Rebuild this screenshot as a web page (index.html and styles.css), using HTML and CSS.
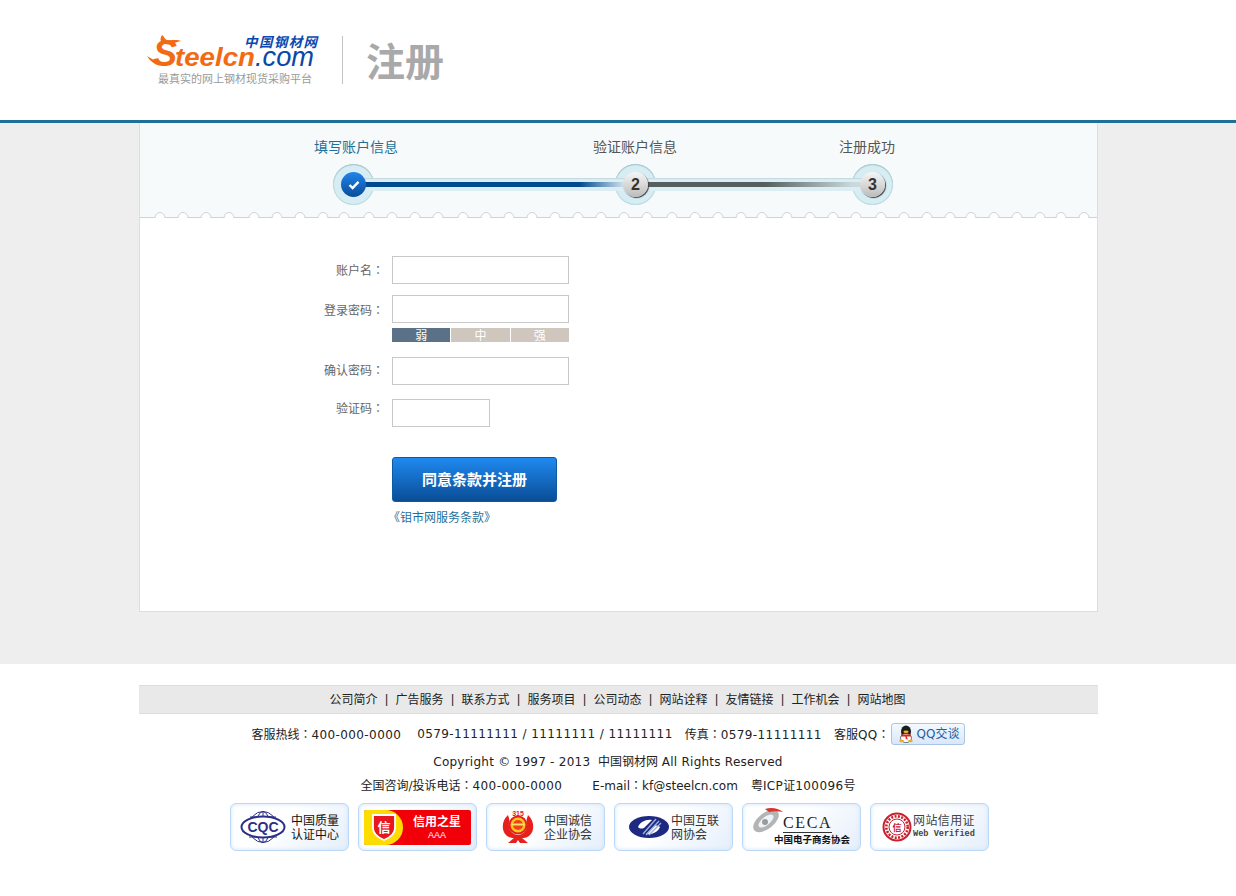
FILE: index.html
```html
<!DOCTYPE html>
<html lang="zh-CN">
<head>
<meta charset="utf-8">
<title>注册</title>
<link rel="stylesheet" href="styles.css">
</head>
<body>
<header class="site-head">
  <svg class="logo" width="175" height="56" viewBox="0 0 175 56">
    <path fill="#f26a12" d="M16 3c3 2 2 4 5 5 5 1 9-1 14 1-3 1-6 1-8 3-5 1-9 0-11-1-2-2-2-5 0-8z"/>
    <path fill="#f26a12" d="M1 24c5 3 8 5 12 6l-1 3C8 32 4 29 1 24z"/>
    <text class="logo-s" x="7" y="34">S</text>
    <text class="logo-word logo-orange" x="29" y="34" textLength="80" lengthAdjust="spacingAndGlyphs">teelcn</text>
    <text class="logo-word logo-blue" x="109" y="34" textLength="59" lengthAdjust="spacingAndGlyphs">.com</text>
    <text class="logo-cn" x="98" y="15" textLength="73">中国钢材网</text>
    <text class="logo-sub" x="12" y="51" textLength="154">最真实的网上钢材现货采购平台</text>
  </svg>
  <span class="head-rule"></span>
  <h1 class="head-title">注册</h1>
</header>

<main class="main">
  <section class="card">
    <div class="steps">
      <div class="step-labels">
        <span class="step-label is-on">填写账户信息</span>
        <span class="step-label">验证账户信息</span>
        <span class="step-label">注册成功</span>
      </div>
      <div class="step-track">
        <span class="ring"><span class="dot dot-on"><svg width="12" height="10" viewBox="0 0 12 10"><path d="M1.5 5 4.6 8 10.5 1.8" fill="none" stroke="#fff" stroke-width="2.4"/></svg></span></span>
        <span class="seg seg-one"></span>
        <span class="ring"><span class="dot">2</span></span>
        <span class="seg seg-two"></span>
        <span class="ring"><span class="dot">3</span></span>
      </div>
      <svg class="scallop" width="957" height="7" viewBox="0 0 957 7">
        <rect y="5" width="957" height="1" fill="#d2d2d2"/>
        <rect y="6" width="957" height="1" fill="#fff"/>
        <path fill="#fff" stroke="#d2d2d2" d="M15 6a5 5.5 0 0 1 10 0m13 0a5 5.5 0 0 1 10 0m13 0a5 5.5 0 0 1 10 0m13 0a5 5.5 0 0 1 10 0m15 0a5 5.5 0 0 1 10 0m13 0a5 5.5 0 0 1 10 0m13 0a5 5.5 0 0 1 10 0m13 0a5 5.5 0 0 1 10 0m11 0a5 5.5 0 0 1 10 0m15 0a5 5.5 0 0 1 10 0m13 0a5 5.5 0 0 1 10 0m13 0a5 5.5 0 0 1 10 0m13 0a5 5.5 0 0 1 10 0m15 0a5 5.5 0 0 1 10 0m13 0a5 5.5 0 0 1 10 0m13 0a5 5.5 0 0 1 10 0m13 0a5 5.5 0 0 1 10 0m13 0a5 5.5 0 0 1 10 0m13 0a5 5.5 0 0 1 10 0m13 0a5 5.5 0 0 1 10 0m13 0a5 5.5 0 0 1 10 0m13 0a5 5.5 0 0 1 10 0m15 0a5 5.5 0 0 1 10 0m13 0a5 5.5 0 0 1 10 0m13 0a5 5.5 0 0 1 10 0m13 0a5 5.5 0 0 1 10 0m11 0a5 5.5 0 0 1 10 0m15 0a5 5.5 0 0 1 10 0m13 0a5 5.5 0 0 1 10 0m13 0a5 5.5 0 0 1 10 0m13 0a5 5.5 0 0 1 10 0m15 0a5 5.5 0 0 1 10 0m13 0a5 5.5 0 0 1 10 0m13 0a5 5.5 0 0 1 10 0m13 0a5 5.5 0 0 1 10 0m11 0a5 5.5 0 0 1 10 0m13 0a5 5.5 0 0 1 10 0m13 0a5 5.5 0 0 1 10 0m13 0a5 5.5 0 0 1 10 0m11 0a5 5.5 0 0 1 10 0m13 0a5 5.5 0 0 1 10 0"/>
      </svg>
    </div>

    <form class="form">
      <div class="row row-name">
        <label class="label">账户名<span class="colon" lang="zh-TW">：</span></label>
        <input class="field" type="text">
      </div>
      <div class="row row-pass">
        <label class="label">登录密码<span class="colon" lang="zh-TW">：</span></label>
        <div class="field-stack">
          <input class="field" type="password">
          <div class="meter">
            <span class="meter-cell is-on">弱</span>
            <span class="meter-cell">中</span>
            <span class="meter-cell">强</span>
          </div>
        </div>
      </div>
      <div class="row row-confirm">
        <label class="label">确认密码<span class="colon" lang="zh-TW">：</span></label>
        <input class="field" type="password">
      </div>
      <div class="row row-code">
        <label class="label label-code">验证码<span class="colon" lang="zh-TW">：</span></label>
        <input class="field field-short" type="text">
      </div>
      <div class="actions">
        <button class="submit" type="button">同意条款并注册</button>
        <a class="terms" href="#">《钼市网服务条款》</a>
      </div>
    </form>
  </section>
</main>

<footer class="foot">
  <nav class="foot-nav">
    <a href="#">公司简介</a><span class="sep">|</span>
    <a href="#">广告服务</a><span class="sep">|</span>
    <a href="#">联系方式</a><span class="sep">|</span>
    <a href="#">服务项目</a><span class="sep">|</span>
    <a href="#">公司动态</a><span class="sep">|</span>
    <a href="#">网站诠释</a><span class="sep">|</span>
    <a href="#">友情链接</a><span class="sep">|</span>
    <a href="#">工作机会</a><span class="sep">|</span>
    <a href="#">网站地图</a>
  </nav>
  <div class="contact">
    <span>客服热线<span class="colon" lang="zh-TW">：</span><span class="lat">400-000-0000</span></span>
    <span class="lat gap-lg">0579-11111111 / 11111111 / 11111111</span>
    <span class="gap-md">传真<span class="colon" lang="zh-TW">：</span><span class="lat">0579-11111111</span></span>
    <span class="gap-md">客服<span class="lat">QQ</span><span class="colon" lang="zh-TW">：</span></span>
    <a class="qq" href="#">
      <svg width="18" height="18" viewBox="0 0 18 18">
        <ellipse cx="9" cy="6.5" rx="5" ry="6" fill="#1c1c1c"/>
        <ellipse cx="9" cy="13" rx="5.5" ry="4.6" fill="#fff" stroke="#222" stroke-width=".6"/>
        <ellipse cx="9" cy="6.8" rx="2.6" ry="1.2" fill="#f6b81c"/>
        <path d="M4 9.5h10v2H9.8l1 3-2-.6-.4-2.4H4z" fill="#e0241c"/>
        <ellipse cx="4.6" cy="16" rx="2.4" ry="1.3" fill="#f6a81c"/>
        <ellipse cx="13.4" cy="16" rx="2.4" ry="1.3" fill="#f6a81c"/>
      </svg>
      <span>QQ交谈</span>
    </a>
  </div>
  <p class="foot-line foot-copy"><span class="lat-copy">Copyright © 1997 - 2013</span>&nbsp; 中国钢材网 <span class="lat-copy">All Rights Reserved</span></p>
  <p class="foot-line foot-tel"><span>全国咨询/投诉电话<span class="colon" lang="zh-TW">：</span><span class="lat">400-000-0000</span></span><span class="gap-xl">E-mail<span class="colon" lang="zh-TW">：</span>kf@steelcn.com</span><span class="gap-sm">粤<span class="lat">ICP</span>证<span class="lat">100096</span>号</span></p>
  <div class="badges">
    <a class="badge" href="#">
      <svg width="46" height="34" viewBox="0 0 46 34">
        <g fill="none" stroke="#2c2f86">
          <ellipse cx="23" cy="17" rx="14" ry="15.5"/>
          <ellipse cx="23" cy="17" rx="7" ry="15.5"/>
          <path d="M10 7h26M9 27h28M8 12h30M8 22h30M23 1v32"/>
          <ellipse cx="23" cy="17" rx="21.5" ry="10.5" stroke-width="2" fill="#fff"/>
        </g>
        <text class="cqc" x="23" y="22" text-anchor="middle">CQC</text>
      </svg>
      <span class="badge-text badge-black">中国质量<br>认证中心</span>
    </a>
    <a class="badge badge-star" href="#">
      <span class="star-box">
        <span class="star-left">
          <svg width="24" height="28" viewBox="0 0 24 28">
            <path d="M1 2h22v13c0 6-6 10-11 12C7 25 1 21 1 15z" fill="#e8171f" stroke="#fff" stroke-width="1.8"/>
            <text class="star-mark" x="12" y="19" text-anchor="middle">信</text>
          </svg>
        </span>
        <span class="star-right"><b>信用之星</b><small>AAA</small></span>
      </span>
    </a>
    <a class="badge" href="#">
      <svg width="34" height="34" viewBox="0 0 34 34">
        <path d="M7 5C1 10 0 20 5 25c3 3 6 3 8 3l-6 5h8l2-3 2 3h8l-6-5c2 0 5 0 8-3 5-5 4-15-2-20-1 4-2 5-1 8 1 7-4 12-9 12S7 20 8 13c1-3 0-4-1-8z" fill="#e8201c"/>
        <circle cx="17" cy="15" r="8.5" fill="#f8c81c" stroke="#e8201c" stroke-width="2"/>
        <circle cx="17" cy="15" r="5" fill="#f04020"/>
        <rect x="10.5" y="13.5" width="13" height="2" fill="#f8e060"/>
        <text class="emblem-num" x="17" y="6" text-anchor="middle">315</text>
      </svg>
      <span class="badge-text">中国诚信<br>企业协会</span>
    </a>
    <a class="badge badge-isc" href="#">
      <svg width="42" height="26" viewBox="0 0 42 26">
        <ellipse cx="21" cy="13" rx="20" ry="11" fill="#1e2a82"/>
        <path d="M10 13c2-5 8-8 14-7l-7 7c-2 2-5 2-7 0zM32 13c-2 5-8 8-14 7l7-7c2-2 5-2 7 0z" fill="#fff"/>
        <path d="M15 20 28 5M18 21 31 7M21 21 33 9" stroke="#9fb0d8" stroke-width="1.4" fill="none"/>
      </svg>
      <span class="badge-text">中国互联<br>网协会</span>
    </a>
    <a class="badge badge-ceca" href="#">
      <span class="ceca-top">
        <svg width="34" height="26" viewBox="0 0 34 26">
          <ellipse cx="15" cy="14" rx="15" ry="8" transform="rotate(-38 15 14)" fill="#b4b4b4"/>
          <ellipse cx="15" cy="14" rx="9" ry="4" transform="rotate(-38 15 14)" fill="#eef3f8"/>
          <path d="M14 2c6-2 13-1 18 3-5-1-10-1-14 0z" fill="#d8342c"/>
          <circle cx="14" cy="15" r="3" fill="#9a9a9a"/>
        </svg>
        <span class="ceca-word">CECA</span>
      </span>
      <span class="ceca-cn">中国电子商务协会</span>
    </a>
    <a class="badge badge-web" href="#">
      <svg width="30" height="30" viewBox="0 0 30 30">
        <circle cx="15" cy="15" r="13.5" fill="#fff" stroke="#c8202c" stroke-width="2"/>
        <circle cx="15" cy="15" r="8" fill="none" stroke="#c8202c" stroke-width="1"/>
        <circle cx="15" cy="15" r="10.7" fill="none" stroke="#c8202c" stroke-width="2.6" stroke-dasharray="2 1.4"/>
        <text class="stamp-mark" x="15" y="19" text-anchor="middle">信</text>
      </svg>
      <span class="web-text"><span>网站信用证</span><span class="web-en">Web Verified</span></span>
    </a>
  </div>
</footer>
</body>
</html>
```
FILE: styles.css
```css
* { box-sizing: border-box; }
html, body { margin: 0; padding: 0; }
body {
  background: #fff;
  color: #333;
  font: 12px/16px "DejaVu Sans", "Noto Sans CJK SC", sans-serif;
}
a { color: inherit; text-decoration: none; }
p, h1 { margin: 0; }
.colon { font-family: "Noto Sans CJK TC", sans-serif; }
.lat { letter-spacing: .4px; }
.lat-copy { letter-spacing: .25px; }

.site-head {
  display: flex;
  align-items: flex-start;
  height: 123px;
  padding: 32px 0 0 146px;
  border-bottom: 3px solid #1f7099;
  background: #fff;
}
.logo { display: block; flex: none; }
.logo-s { fill: #f26a12; font: italic 700 36px "Liberation Sans", sans-serif; }
.logo-word { font-family: "Liberation Sans", sans-serif; font-style: italic; font-size: 26px; }
.logo-orange { fill: #f26a12; font-weight: 700; }
.logo-blue { fill: #0a48a8; font-size: 28px; }
.logo-cn { fill: #0a48b0; font-family: "Noto Sans CJK SC", sans-serif; font-weight: 700; font-style: italic; font-size: 13.5px; }
.logo-sub { fill: #9a9a9a; font-family: "Noto Sans CJK SC", sans-serif; font-size: 11px; }
.head-rule { width: 1px; height: 48px; margin: 4px 0 0 21px; background: #c4c4c4; }
.head-title {
  margin: 3px 0 0 23px;
  color: #a9a9a9;
  font: 700 39px/48px "Noto Sans CJK SC", sans-serif;
}

.main { height: 541px; background: #eee; }
.card {
  width: 959px;
  height: 489px;
  margin: 0 0 0 139px;
  border: 1px solid #ddd;
  border-top: 0;
  background: #fff;
}

.steps { height: 96px; background: #f6fafb; padding-top: 15px; }
.step-labels { display: flex; height: 16px; padding-left: 174px; font: 14px/16px "Noto Sans CJK SC", sans-serif; color: #555; }
.step-label:nth-child(2) { margin-left: 195px; }
.step-label:nth-child(3) { margin-left: 162px; }
.step-label.is-on { color: #1f7099; }
.step-track { display: flex; align-items: center; height: 41px; margin-top: 10px; padding-left: 193px; }
.ring {
  display: flex;
  flex: none;
  align-items: center;
  justify-content: center;
  width: 41px;
  height: 41px;
  border-radius: 50%;
  background: #d5edf3;
  box-shadow: inset 0 1px 1px #a9c3c9, inset 0 0 0 1px #c0dae0;
}
.dot {
  position: relative;
  z-index: 2;
  display: flex;
  align-items: center;
  justify-content: center;
  width: 25px;
  height: 25px;
  border-radius: 50%;
  background: linear-gradient(#f6f6f6, #bcbcbc);
  box-shadow: 1px 1px 1px #444;
  color: #333;
  font: 700 16px/1 "Liberation Sans", sans-serif;
}
.dot-on { background: linear-gradient(#1f85ea, #0b4c98); box-shadow: none; }
.seg { position: relative; z-index: 1; flex: none; height: 13px; margin: 0 -12px; background: #dcedf4; box-shadow: inset 0 1px 1px #c3d8df; }
.seg::after { content: ""; position: absolute; left: 0; right: 0; top: 4px; height: 5px; }
.seg-one { width: 265px; }
.seg-one::after { background: linear-gradient(to right, #00498f 0 82%, #dcedf4 100%); }
.seg-two { width: 220px; }
.seg-two::after { background: linear-gradient(to right, #555f5f 0 55%, #c9dadd 95%); }
.scallop { display: block; margin-top: 7px; }

.form { padding-top: 37px; }
.row { display: flex; align-items: flex-start; margin-bottom: 11px; }
.row-name { height: 28px; }
.row-pass { height: 47px; margin-bottom: 15px; }
.row-confirm { height: 28px; margin-bottom: 14px; }
.row-code { height: 28px; margin-bottom: 30px; }
.label {
  flex: none;
  width: 244px;
  margin-right: 8px;
  padding-top: 6px;
  color: #666;
  text-align: right;
  font: 12px/16px "Noto Sans CJK SC", sans-serif;
}
.row-pass .label { padding-top: 7px; }
.row-confirm .label { padding-top: 5px; }
.label-code { padding-top: 1px; }
.field { display: block; width: 177px; height: 28px; padding: 0 6px; border: 1px solid #c8c8c8; background: #fff; outline: 0; }
.field-short { width: 98px; }
.field-stack { width: 177px; }
.meter { display: flex; gap: 1px; margin-top: 5px; }
.meter-cell {
  flex: 1;
  height: 14px;
  background: #cfc6be;
  color: #fff;
  text-align: center;
  font: 12px/14px "Noto Sans CJK SC", sans-serif;
}
.meter-cell.is-on { background: #5a7187; }
.actions { display: flex; flex-direction: column; align-items: flex-start; padding-left: 252px; }
.submit {
  width: 165px;
  height: 45px;
  padding: 0 0 2px;
  border: 1px solid #0c5aa6;
  border-radius: 3px;
  background: linear-gradient(#2089ef, #0a4d96);
  color: #fff;
  font: 700 15px/1 "Noto Sans CJK SC", sans-serif;
  cursor: pointer;
}
.terms { margin: 7px 0 0 -4px; color: #1f7099; font: 12px/16px "Noto Sans CJK SC", sans-serif; }

.foot { height: 232px; padding-top: 21px; background: #fff; color: #222; text-align: center; }
.foot-nav {
  display: flex;
  justify-content: center;
  align-items: center;
  gap: 8px;
  width: 959px;
  height: 29px;
  margin: 0 0 0 139px;
  padding: 0 2px 2px 0;
  border-top: 1px solid #ddd;
  border-bottom: 1px solid #ddd;
  background: #e9e9e9;
  color: #222;
  font-family: "Noto Sans CJK SC", sans-serif;
}
.sep { display: flex; justify-content: center; width: 2px; font-family: "Liberation Sans", sans-serif; }
.contact { display: flex; justify-content: center; align-items: center; height: 22px; margin-top: 9px; padding-right: 20px; }
.gap-lg { margin-left: 16px; }
.gap-md { margin-left: 12px; }
.gap-sm { margin-left: 13px; }
.gap-xl { margin-left: 30px; }
.qq {
  display: flex;
  align-items: center;
  gap: 2px;
  width: 74px;
  height: 22px;
  margin-left: 1px;
  padding-left: 5px;
  border: 1px solid #a9c5e6;
  border-radius: 3px;
  background: linear-gradient(#f4f9ff, #d9e7f8);
  color: #1f5f9f;
}
.foot-line { height: 20px; padding-right: 20px; line-height: 20px; }
.foot-copy { margin-top: 7px; }
.foot-tel { margin-top: 3px; }
.badges { display: flex; gap: 9px; margin: 8px 0 0 230px; }
.badge {
  display: flex;
  flex: none;
  align-items: center;
  gap: 5px;
  width: 119px;
  height: 48px;
  padding-left: 9px;
  border: 1px solid #bcd8f6;
  border-radius: 6px;
  background: linear-gradient(135deg, #fff 40%, #e4effb);
  box-shadow: inset 0 0 4px #cfe2f8;
}
.badge:nth-child(3) { padding-left: 14px; gap: 9px; }
.badge-text { color: #333; text-align: left; font: 12px/14px "Noto Sans CJK SC", sans-serif; }
.badge-black { color: #111; }
.cqc { fill: #2c2f86; font: 700 14px "Liberation Sans", sans-serif; }
.badge-star { padding: 0 0 0 5px; }
.star-box {
  display: flex;
  width: 107px;
  height: 35px;
  border-radius: 2px;
  overflow: hidden;
  background: #f2000a;
}
.star-left {
  display: flex;
  flex: none;
  align-items: center;
  justify-content: center;
  width: 39px;
  border-radius: 0 18px 18px 0 / 0 18px 18px 0;
  background: #ffdc00;
}
.star-mark { fill: #fff; font: 700 13px "Noto Sans CJK SC", sans-serif; }
.star-right { display: flex; flex: 1; flex-direction: column; align-items: center; color: #fff; }
.star-right b { font: 700 12px/15px "Noto Sans CJK SC", sans-serif; margin-top: 3px; }
.star-right small { font: 9px/11px "Liberation Sans", sans-serif; margin-top: 2px; }
.emblem-num { fill: #e8201c; font: 700 7px "Liberation Sans", sans-serif; }
.badge-isc { padding-left: 13px; gap: 1px; }
.badge-ceca { flex-direction: column; align-items: flex-start; gap: 0; padding: 3px 0 0 8px; }
.ceca-top { display: flex; align-items: flex-end; height: 26px; }
.ceca-word { margin-left: -2px; color: #222; font: 16px/18px "Liberation Serif", serif; letter-spacing: 1.6px; border-bottom: 1px solid #333; }
.ceca-cn { margin-left: 23px; color: #111; font: 700 9.5px/13px "Noto Sans CJK SC", sans-serif; white-space: nowrap; }
.badge-web { padding-left: 11px; gap: 1px; }
.stamp-mark { fill: #c8202c; font: 700 9px "Noto Sans CJK SC", sans-serif; }
.web-text { display: flex; flex-direction: column; color: #444; text-align: left; font: 12px/14px "Noto Sans CJK SC", sans-serif; letter-spacing: .4px; }
.web-en { font: 700 8.6px/14px "Liberation Mono", monospace; letter-spacing: 0; }
```
